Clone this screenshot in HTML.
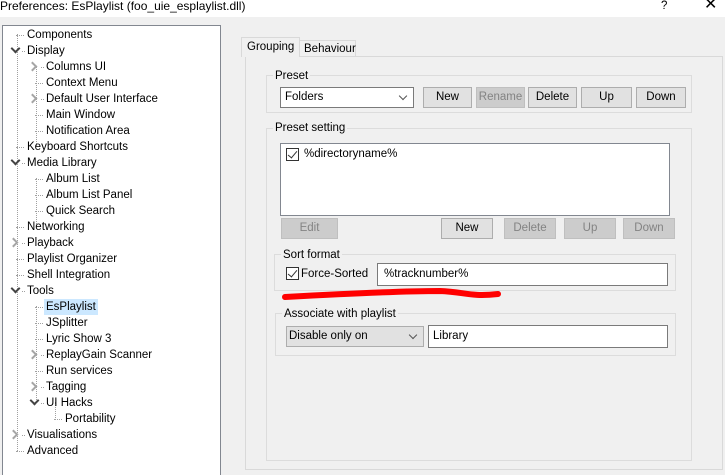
<!DOCTYPE html>
<html style="overflow:hidden;width:725px;height:475px"><head><meta charset="utf-8"><style>
*{box-sizing:border-box;margin:0;padding:0}
body{width:725px;height:475px;overflow:hidden;background:#f0f0f0;font-family:"Liberation Sans",sans-serif;font-size:11.5px;color:#000;position:relative}
.a{position:absolute}
.tb{left:0;top:0;width:725px;height:17px;background:#fff}
.tree{left:2px;top:25px;width:219px;height:450px;background:#fff;border:1px solid #828790;border-bottom:none}
.r{position:absolute;height:16px;line-height:16px;white-space:nowrap}
.vl{position:absolute;border-left:1px dotted #a0a0a0;width:0}
.hl{position:absolute;border-top:1px dotted #a0a0a0;height:0;width:8px}
.arr{position:absolute;width:7px;height:7px;border-right:2px solid #a6a6a6;border-bottom:2px solid #a6a6a6;transform:rotate(-45deg)}
.exp{position:absolute;width:7px;height:7px;border-right:2px solid #444;border-bottom:2px solid #444;transform:rotate(45deg)}
.btn{position:absolute;height:21px;background:#e1e1e1;border:1px solid #adadad;text-align:center;line-height:19px}
.dis{background:#cccccc;border-color:#bfbfbf;color:#838383}
.grp{position:absolute;border:1px solid #dcdcdc}
.lg{position:absolute;background:#f0f0f0;padding:0 2px;line-height:14px}
.ed{position:absolute;background:#fff;border:1px solid #7a7a7a;padding-left:6px;line-height:20px}
.cb{position:absolute;width:13px;height:13px;border:1px solid #333;background:#fff}
.cb:after{content:"";position:absolute;left:3px;top:0px;width:4px;height:8px;border-right:1.3px solid #333;border-bottom:1.3px solid #333;transform:rotate(40deg)}
.chev{position:absolute;width:6px;height:6px;border-right:1px solid #555;border-bottom:1px solid #555;transform:rotate(45deg)}
</style></head><body>
<div class="a tb"></div>
<div class="a" style="left:0;top:0;line-height:12px;font-size:12px">Preferences: EsPlaylist (foo_uie_esplaylist.dll)</div>
<div class="a" style="left:661px;top:0;line-height:12px">?</div>
<div class="a" style="left:704px;top:-3px;font-size:16px;line-height:16px">✕</div>

<div class="a tree">
<div class="vl" style="left:14px;top:8px;height:417px"></div>
<div class="vl" style="left:33px;top:40px;height:80px"></div>
<div class="vl" style="left:33px;top:152px;height:48px"></div>
<div class="vl" style="left:33px;top:280px;height:96px"></div>
<div class="vl" style="left:52px;top:376px;height:16px"></div>
</div>
<div class="a" style="left:3px;top:26px;width:217px;height:449px;overflow:hidden">
<div id="rows"></div>
</div>
<script>
var rows=[["Components",0,""],["Display",0,"e"],["Columns UI",1,"c"],["Context Menu",1,""],["Default User Interface",1,"c"],["Main Window",1,""],["Notification Area",1,""],["Keyboard Shortcuts",0,""],["Media Library",0,"e"],["Album List",1,""],["Album List Panel",1,""],["Quick Search",1,""],["Networking",0,""],["Playback",0,"c"],["Playlist Organizer",0,""],["Shell Integration",0,""],["Tools",0,"e"],["EsPlaylist",1,"s"],["JSplitter",1,""],["Lyric Show 3",1,""],["ReplayGain Scanner",1,"c"],["Run services",1,""],["Tagging",1,"c"],["UI Hacks",1,"e"],["Portability",2,""],["Visualisations",0,"c"],["Advanced",0,""]];
var h="";
rows.forEach(function(r,i){var y=1+16*i;var tx=24+19*r[1];var lx=13+19*r[1];
if(r[2]=="e"){h+='<div class="exp" style="left:'+(lx-4)+'px;top:'+(y+2)+'px"></div><div class="hl" style="left:'+(lx+6)+'px;top:'+(y+8)+'px;width:3px"></div>';}
else if(r[2]=="c"){h+='<div class="arr" style="left:'+(lx-6)+'px;top:'+(y+4)+'px"></div><div class="hl" style="left:'+(lx+6)+'px;top:'+(y+8)+'px;width:3px"></div>';}
else h+='<div class="hl" style="left:'+(lx)+'px;top:'+(y+8)+'px"></div>';
h+='<div class="r" style="left:'+(tx-2)+'px;top:'+y+'px;padding:0 2px;'+(r[2]=="s"?'background:#cce8ff':'')+'">'+r[0]+'</div>';});
document.getElementById("rows").innerHTML=h;
</script>

<!-- tabs -->
<div class="a" style="left:245px;top:56px;width:478px;height:414px;background:#f0f0f0;border:1px solid #d9d9d9"></div>
<div class="a" style="left:241px;top:37px;width:59px;height:20px;background:#f0f0f0;border:1px solid #d9d9d9;border-bottom:none;line-height:18px;padding-left:5px">Grouping</div>
<div class="a" style="left:299px;top:40px;width:57px;height:16px;background:#f0f0f0;border:1px solid #d9d9d9;border-bottom:none;line-height:16px;padding-left:4px">Behaviour</div>

<div class="grp" style="left:266px;top:75px;width:426px;height:38px"></div>
<div class="grp" style="left:266px;top:128px;width:426px;height:333px"></div>

<div class="lg" style="left:273px;top:69px">Preset</div>
<div class="ed" style="left:280px;top:87px;width:134px;height:21px;line-height:19px;padding-left:4px">Folders</div>
<div class="chev" style="left:400px;top:93px"></div>
<div class="btn" style="left:423px;top:87px;width:49px">New</div>
<div class="btn dis" style="left:476px;top:87px;width:49px">Rename</div>
<div class="btn" style="left:528px;top:87px;width:49px">Delete</div>
<div class="btn" style="left:581px;top:87px;width:51px">Up</div>
<div class="btn" style="left:636px;top:87px;width:50px">Down</div>

<div class="lg" style="left:273px;top:121px">Preset setting</div>
<div class="a" style="left:280px;top:143px;width:390px;height:73px;background:#fff;border:1px solid #828790"></div>
<div class="cb" style="left:286px;top:148px"></div>
<div class="a" style="left:304px;top:146px;line-height:16px">%directoryname%</div>
<div class="btn dis" style="left:281px;top:218px;width:57px">Edit</div>
<div class="btn" style="left:441px;top:218px;width:52px">New</div>
<div class="btn dis" style="left:504px;top:218px;width:52px">Delete</div>
<div class="btn dis" style="left:564px;top:218px;width:52px">Up</div>
<div class="btn dis" style="left:623px;top:218px;width:52px">Down</div>

<div class="grp" style="left:274px;top:254px;width:402px;height:37px"></div>
<div class="lg" style="left:281px;top:248px">Sort format</div>
<div class="cb" style="left:286px;top:267px"></div>
<div class="a" style="left:301px;top:266px;line-height:16px">Force-Sorted</div>
<div class="ed" style="left:377px;top:263px;width:291px;height:23px">%tracknumber%</div>

<svg class="a" style="left:280px;top:285px" width="225" height="18"><path d="M5 12 C60 9 120 6 160 6 C185 7 190 12 218 9" fill="none" stroke="#f00" stroke-width="6" stroke-linecap="round"/></svg>

<div class="grp" style="left:275px;top:313px;width:401px;height:43px"></div>
<div class="lg" style="left:282px;top:307px">Associate with playlist</div>
<div class="a" style="left:286px;top:326px;width:138px;height:21px;background:#e1e1e1;border:1px solid #adadad;line-height:19px;padding-left:2px">Disable only on</div>
<div class="chev" style="left:410px;top:332px"></div>
<div class="ed" style="left:428px;top:325px;width:240px;height:23px;padding-left:4px">Library</div>
</body></html>
